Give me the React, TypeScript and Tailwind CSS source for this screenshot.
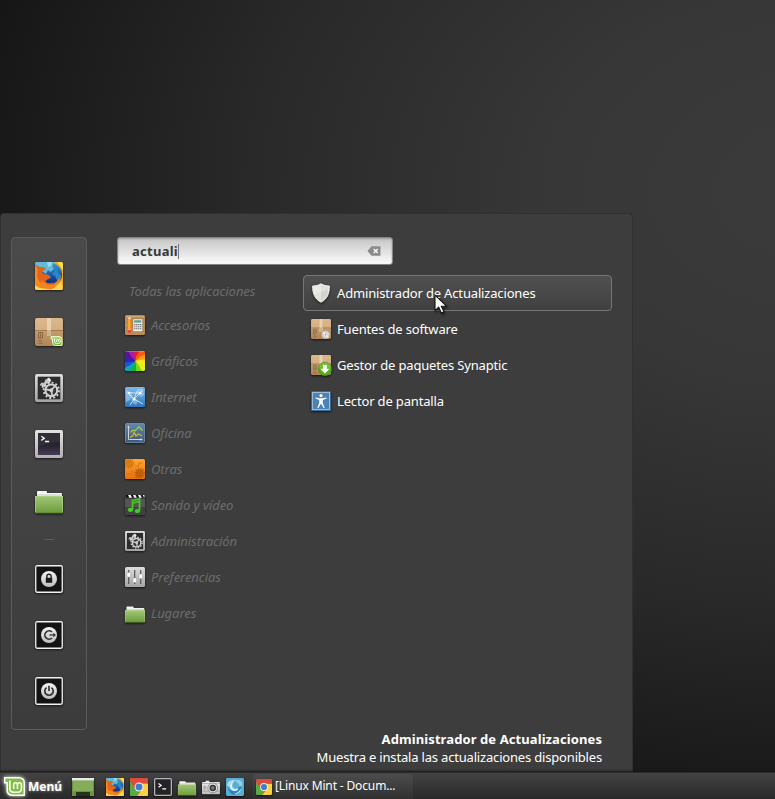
import type { ReactNode } from "react";

type IconProps = { className?: string };

/* Shared gradients used by every icon on the page. */
function Gradients() {
  const v = { x1: 0, y1: 0, x2: 0, y2: 1 };
  return (
    <svg className="absolute size-0" aria-hidden="true">
      <defs>
        <linearGradient id="folder" {...v}><stop stopColor="#a2c777" /><stop offset="1" stopColor="#6e9c3d" /></linearGradient>
        <linearGradient id="silver" {...v}><stop stopColor="#dedede" /><stop offset="1" stopColor="#a4a4a4" /></linearGradient>
        <linearGradient id="light" {...v}><stop stopColor="#f4f4f4" /><stop offset="1" stopColor="#bdbdbd" /></linearGradient>
        <linearGradient id="box" {...v}><stop stopColor="#dcb88b" /><stop offset=".45" stopColor="#c49b6e" /><stop offset="1" stopColor="#b08658" /></linearGradient>
        <linearGradient id="orange" {...v}><stop stopColor="#ffa834" /><stop offset="1" stopColor="#e9700c" /></linearGradient>
        <linearGradient id="sky" {...v}><stop stopColor="#7eb8ee" /><stop offset="1" stopColor="#2f78bd" /></linearGradient>
        <linearGradient id="steel" {...v}><stop stopColor="#6487b0" /><stop offset="1" stopColor="#3d5878" /></linearGradient>
        <linearGradient id="night" {...v}><stop stopColor="#25222b" /><stop offset=".6" stopColor="#29252f" /><stop offset="1" stopColor="#463b57" /></linearGradient>
        <linearGradient id="globe" {...v}><stop stopColor="#3f9ed2" /><stop offset=".6" stopColor="#164c9c" /><stop offset="1" stopColor="#0b2468" /></linearGradient>
        <linearGradient id="mint" {...v}><stop stopColor="#b4e073" /><stop offset="1" stopColor="#67b42c" /></linearGradient>
        <clipPath id="round28"><rect width="28" height="28" rx="2" /></clipPath>
        <clipPath id="round20"><rect width="20" height="20" rx="1.6" /></clipPath>
      </defs>
    </svg>
  );
}

const shadow = "block shrink-0 overflow-visible drop-shadow-[0_1px_1px_rgba(0,0,0,0.65)]";

function Svg({ size, className = "", children }: { size: 20 | 28; className?: string; children: ReactNode }) {
  return (
    <svg viewBox={size === 28 ? "0 0 28 28" : "0 0 20 20"} className={`${shadow} ${className}`}>
      {children}
    </svg>
  );
}

function Firefox({ className }: IconProps) {
  return (
    <Svg size={28} className={className}>
      <g clipPath="url(#round28)">
        <rect width="28" height="28" fill="#e8741b" />
        <path d="M16 0H28V28H12C23 27 29 20 25 9Z" fill="#f7a51d" />
        <path d="M22 0H28V8Z" fill="#ffe04a" />
        <path d="M23 3C28 9 28 18 23 23L17 27C24 21 26 13 23 3Z" fill="#ffe95a" />
        <circle cx="15.3" cy="12.6" r="11.8" fill="url(#globe)" />
        <path d="M0 0H20L17 3.5L19 7L15.5 10L13 8L11 12L5 8L0 5Z" fill="#5fbcdc" />
        <path d="M12 0H17L16 4L13 5Z" fill="#9adbea" />
        <path d="M19 3L24 6L22 9L26 14L23 20L20 14L17 12L20 8Z" fill="#2a86c4" />
        <path d="M0 2Q3 5 5 5Q9 4 11 7L8 9Q6 11 9 12L14 13L16 15.5L12.5 17.5Q10 18.5 11 20Q14 22.5 19 20Q16 25 10 25L0 28Z" fill="#e36418" />
        <path d="M0 3Q4 8 2 14Q4 23 12 26L8 28H0Z" fill="#f28c27" />
        <path d="M7 18Q11 24.5 18 22Q24 19 26 13Q26 24 14 28H8L4 23Z" fill="#f0861d" />
        <path d="M0 23Q4 27 10 26.5L17 28H0ZM14 28Q22 26 26 19L28 28Z" fill="#ffd84d" />
      </g>
    </Svg>
  );
}

function BoxArt() {
  return (
    <>
      <rect width="28" height="28" rx="2" fill="url(#box)" />
      <path d="M1 1H27L28 12H0Z" fill="#dcb98e" opacity=".65" />
      <path d="M0 12.5H28" stroke="#9d744b" strokeWidth=".8" />
      <path d="M12 0H16V18H12Z" fill="#e7d2b0" />
      <path d="M12 12H16V18H12Z" fill="#cfb48c" />
      <path d="M3.5 14.5H7.5V20H3.5ZM5.5 15.5V19M3.5 22.5H6.5M3.5 25H8" fill="none" stroke="#8a6440" strokeWidth="1" />
    </>
  );
}

function PackageMint({ className }: IconProps) {
  return (
    <Svg size={28} className={className}>
      <BoxArt />
      <path d="M16 18.5H24Q27 18.5 27 21.5V27.5H20.5Q17.5 27.5 17.5 24V21H16Z" fill="url(#mint)" stroke="#e4f7cc" strokeWidth="1" />
      <path d="M19.5 20.5V23.6Q19.5 25.6 21.4 25.6H23.4Q25.3 25.6 25.3 23.6V22.6Q25.3 21.6 24.3 21.6Q23.4 21.6 23.4 22.6V24M23.4 22.6Q23.3 21.6 22.4 21.6Q21.5 21.6 21.5 22.6V24" fill="none" stroke="#fff" strokeWidth=".9" />
    </Svg>
  );
}

function PackageDisc({ className }: IconProps) {
  return (
    <Svg size={28} className={className}>
      <BoxArt />
      <circle cx="20.5" cy="22" r="5.6" fill="#d5d5d0" stroke="#a9a49c" strokeWidth=".8" />
      <path d="M20.5 22L17 18.5M20.5 22L24 25.5" stroke="#f2f2f2" strokeWidth="2" />
      <circle cx="20.5" cy="22" r="1.6" fill="#b08d62" stroke="#fff" strokeWidth=".8" />
    </Svg>
  );
}

function PackageDownload({ className }: IconProps) {
  return (
    <Svg size={28} className={className}>
      <BoxArt />
      <circle cx="19.5" cy="19.5" r="9.4" fill="#58ad1e" stroke="#3f8a10" strokeWidth=".8" />
      <path d="M11.2 18A8.4 8.4 0 0 1 27.8 18Z" fill="#8ed14b" opacity=".55" />
      <path d="M16.8 14H22.2V19.3H26L19.5 26L13 19.3H16.8Z" fill="#fff" />
    </Svg>
  );
}

function Gear({ x, y, r, color, hub }: { x: number; y: number; r: number; color: string; hub: string }) {
  const tooth = (2 * Math.PI * (r + 0.8)) / 24;
  return (
    <g>
      <circle cx={x} cy={y} r={r + 0.8} fill="none" stroke={color} strokeWidth="1.9" strokeDasharray={`${tooth} ${tooth}`} />
      <circle cx={x} cy={y} r={r - 1} fill={hub} stroke={color} strokeWidth="2" />
      <path d={`M${x} ${y}L${x - r + 1} ${y - 1}M${x} ${y}L${x + r * 0.6} ${y - r * 0.7}M${x} ${y}L${x + 1} ${y + r - 1}`} stroke={color} strokeWidth="1.7" />
      <circle cx={x} cy={y} r={r * 0.28} fill={color} />
    </g>
  );
}

function GearFrame({ className }: IconProps) {
  return (
    <Svg size={28} className={className}>
      <rect width="28" height="28" rx="2" fill="url(#silver)" />
      <rect x="2.7" y="2.7" width="22.6" height="22.6" fill="#2c2c2c" />
      <path d="M4.5 11.5L6.5 8.5L9 9L10.5 5.5L13.5 4.5L16 6.5L14.5 9L11.5 9.5L10 13L7 14L6.5 11.5Z" fill="#c8c8c8" />
      <path d="M12 5L14 3.6L16 6L15 8Z" fill="#ececec" />
      <Gear x={16.3} y={16.3} r={6.9} color="#d2d2d2" hub="#343434" />
    </Svg>
  );
}

function TerminalLarge({ className }: IconProps) {
  return (
    <Svg size={28} className={className}>
      <rect width="28" height="28" rx="2" fill="url(#silver)" />
      <rect width="28" height="28" rx="2" fill="#fff" opacity=".15" />
      <rect x="3" y="3" width="22" height="22" fill="url(#night)" />
      <path d="M3 3H25V12Q13 12 3 17Z" fill="#fff" opacity=".05" />
      <path d="M6.3 6.3L9.3 8.3L6.3 10.4M10 11.5H14" fill="none" stroke="#fff" strokeWidth="1.3" />
    </Svg>
  );
}

function Folder({ className }: IconProps) {
  return (
    <Svg size={28} className={className}>
      <path d="M2 5.7Q2 5 2.8 5H11Q12 5 12 5.9V7H26Q27 7 27 8V12H2Z" fill="#f5f5f5" />
      <path d="M2 9H27" stroke="#bbb" strokeWidth=".8" />
      <path d="M0 10H28V25.5Q28 27 26.5 27H1.5Q0 27 0 25.5Z" fill="url(#folder)" />
      <path d="M.5 26.5V10.5H27.5V26.5" fill="none" stroke="#b4d38d" strokeWidth=".8" opacity=".75" />
      <path d="M0 27H28" stroke="#507629" strokeWidth=".8" />
    </Svg>
  );
}

function SessionIcon({ className, children }: { className?: string; children: ReactNode }) {
  return (
    <Svg size={28} className={className}>
      <rect x=".75" y=".75" width="26.5" height="26.5" rx="1.4" fill="#131313" stroke="#f2f2f2" strokeWidth="1.3" />
      <circle cx="14" cy="14" r="8" fill="url(#light)" />
      {children}
    </Svg>
  );
}

function Lock({ className }: IconProps) {
  return (
    <SessionIcon className={className}>
      <path d="M11.9 13V11.3A2.1 2.1 0 0 1 16.1 11.3V13" fill="none" stroke="#222" strokeWidth="1.4" />
      <rect x="10.8" y="12.8" width="6.4" height="5" fill="#1c1c1c" />
    </SessionIcon>
  );
}

function Logout({ className }: IconProps) {
  return (
    <SessionIcon className={className}>
      <path d="M17 11A4.2 4.2 0 1 0 17 17" fill="none" stroke="#333" strokeWidth="1.7" />
      <path d="M14.5 14H20" stroke="#333" strokeWidth="1.3" />
      <path d="M18.3 11.8L21 14L18.3 16.2Z" fill="#333" />
    </SessionIcon>
  );
}

function Power({ className }: IconProps) {
  return (
    <SessionIcon className={className}>
      <path d="M11.6 10.6A4.2 4.2 0 1 0 16.4 10.6M14 8.8V14" fill="none" stroke="#333" strokeWidth="1.7" />
    </SessionIcon>
  );
}

function Accessories({ className }: IconProps) {
  return (
    <Svg size={20} className={className}>
      <rect width="20" height="20" rx="1.6" fill="#b98c58" />
      <path d="M.5 1H19.5V2.5H.5ZM.5 7H19.5M.5 12H19.5M.5 16H19.5" fill="#dab380" stroke="#a57843" strokeWidth=".4" />
      <path d="M3 4L4.5 1.2L6 4V15H3Z" fill="#f28c1b" />
      <path d="M3 4L4.5 1.2L6 4Z" fill="#f4deb6" />
      <path d="M4.1 4V15" stroke="#ffc14e" />
      <path d="M3 14H6V15H3Z" fill="#ccc" />
      <rect x="3" y="15" width="3" height="2.8" fill="#e5484a" />
      <rect x="8" y="4" width="9.5" height="12.5" rx=".8" fill="#eeeee8" stroke="#777" strokeWidth=".4" />
      <rect x="9.2" y="5.3" width="7" height="2.3" fill="#5e9d84" />
      {[9.1, 11.2, 13.3].map((y) => (
        <path key={y} d={`M9.3 ${y + 0.5}H16.4`} stroke="#4a4a4a" strokeWidth="1.1" strokeDasharray="1.1 .85" />
      ))}
    </Svg>
  );
}

function Graphics({ className }: IconProps) {
  const colors = ["#e82127", "#ff5a13", "#ff9d16", "#f9e91b", "#e6f01b", "#7fd51d", "#0fb63a", "#12a7b0", "#1555df", "#3521bd", "#5a1298", "#a41eab"];
  return (
    <Svg size={20} className={className}>
      <g clipPath="url(#round20)">
        {colors.map((c, i) => (
          <path key={c} d="M10 10Q7.5 2 10 -6H19Q13 3 10 10Z" fill={c} transform={`rotate(${i * 30} 10 10)`} />
        ))}
        <path d="M0 0H20V1H0Z" fill="#fff" opacity=".25" />
      </g>
    </Svg>
  );
}

function Internet({ className }: IconProps) {
  return (
    <Svg size={20} className={className}>
      <rect width="20" height="20" rx="1.6" fill="url(#sky)" />
      <path d="M1 3L6 5L8 9L5 13L1 15ZM12 2H18L19 8L16 10L12 7ZM9 12L13 13L11 18L8 16Z" fill="#b7dafa" opacity=".5" />
      <path d="M2.5 5.5L9 12L17.5 3.5M9 12L5 18M9 12L18 17M3 5.5L17 6.5M9 12L12 4" fill="none" stroke="#e9f4ff" strokeWidth=".8" />
      <circle cx="9" cy="12" r="1.6" fill="#fff" />
      <circle cx="4" cy="6" r="1.1" fill="#fff" />
      <circle cx="15" cy="6" r="1.2" fill="#fff" />
    </Svg>
  );
}

function Office({ className }: IconProps) {
  return (
    <Svg size={20} className={className}>
      <rect x=".4" y=".4" width="19.2" height="19.2" rx="1.4" fill="url(#steel)" stroke="#809dbc" strokeWidth=".8" />
      <path d="M3.5 3V16.5H17" fill="none" stroke="#ddd" strokeWidth=".9" />
      <path d="M2.3 4.7L3.5 2.2L4.7 4.7M15.5 15.3L18 16.5L15.5 17.7" fill="#ddd" />
      <path d="M5.5 9.5L8 7.2L10 7.8L14 3.8L17.5 7.5" fill="none" stroke="#a6d936" strokeWidth="1.1" />
      <path d="M5 14.5L7.5 13L9.3 9.5L11 13L13.5 11L17 13" fill="none" stroke="#e5b51b" strokeWidth="1.2" />
    </Svg>
  );
}

function Others({ className }: IconProps) {
  return (
    <Svg size={20} className={className}>
      <g clipPath="url(#round20)">
        <rect width="20" height="20" fill="url(#orange)" />
        <Gear x={4} y={4.5} r={3.8} color="#d8780f" hub="#f79a27" />
        <Gear x={14.8} y={14.2} r={3.8} color="#bd5b0a" hub="#ee8419" />
        <path d="M10 7H14V4H18M7 11V15H2M8 18H11" fill="none" stroke="#d0700f" strokeWidth=".8" />
      </g>
    </Svg>
  );
}

function Sound({ className }: IconProps) {
  return (
    <Svg size={20} className={className}>
      <rect y="1" width="20" height="19" rx="1.6" fill="#414141" />
      <rect y="4" width="20" height="8" fill="#555" />
      <path d="M1 0H20V2.4H1Z" fill="#111" />
      <path d="M3 0H5.7L7 2.8H4.3ZM8 0H10.5L11.8 2.8H9.2ZM13 0H15.5L16.8 2.8H14.2ZM17.7 0H19.5V2.6H19Z" fill="#f4f4f4" />
      <path d="M7.5 14.5V5.5L14.5 4V15.5M7.5 8L14.5 6.5" fill="none" stroke="#43cc26" strokeWidth="1.7" />
      <ellipse cx="5.6" cy="14.8" rx="2.7" ry="2.1" fill="#43cc26" />
      <ellipse cx="12.5" cy="16" rx="2.7" ry="2.1" fill="#43cc26" />
    </Svg>
  );
}

function Preferences({ className }: IconProps) {
  return (
    <Svg size={20} className={className}>
      <rect width="20" height="20" rx="1.6" fill="url(#silver)" />
      <path d="M3.7 3V17M9.7 3V17M15.7 3V17" stroke="#555" strokeWidth="1.2" />
      {[[2, 5.5], [8, 11], [14, 7]].map(([x, y]) => (
        <rect key={x} x={x} y={y} width="3.5" height="4.6" rx=".7" fill="#fff" stroke="#8f8f8f" strokeWidth=".4" />
      ))}
    </Svg>
  );
}

function Shield({ className }: IconProps) {
  return (
    <Svg size={20} className={className}>
      <path d="M10 .8C7.5 2.5 4.5 3 1.7 3C1.5 10 3.5 16 10 19.2C16.5 16 18.5 10 18.3 3C15.5 3 12.5 2.5 10 .8Z" fill="#e2e3de" stroke="#f6f6f4" strokeWidth="1" />
      <path d="M10 2V18C15.5 15 17.2 10 17.2 4C14.5 4 12 3.3 10 2Z" fill="#d2d3cd" />
      <path d="M2.7 4C5.5 4 8 3.3 10 2C12 3.3 14.5 4 17.2 4V7Q9 9 3 11Z" fill="#fff" opacity=".3" />
    </Svg>
  );
}

function Accessibility({ className }: IconProps) {
  return (
    <Svg size={20} className={className}>
      <rect width="20" height="20" rx="1.2" fill="#3a6a98" />
      <rect x="1.5" y="1.5" width="17" height="17" fill="#4c82b4" stroke="#a3c4e0" strokeWidth=".9" />
      <circle cx="10" cy="4.6" r="1.6" fill="#fff" />
      <path d="M4.5 6.5L8.7 7.2H11.3L15.5 6.5V7.6L11.8 8.9V12L13.7 17H12.6L10 12.5L7.4 17H6.3L8.2 12V8.9L4.5 7.6Z" fill="#fff" />
    </Svg>
  );
}

function MintLogo({ className }: IconProps) {
  return (
    <svg viewBox="0 0 20 18" className={`block shrink-0 overflow-visible drop-shadow-[0_0_2px_rgba(255,255,255,0.9)] ${className}`}>
      <path d="M.7.7H14Q19.3.7 19.3 6V17.3H8.5Q3 17.3 3 12V5.5H.7Z" fill="#82bd43" stroke="#fff" strokeWidth="1.4" />
      <path d="M5.6 3.2V11Q5.6 14.5 9 14.5H13.1Q16.6 14.5 16.6 11V7.6Q16.6 5.5 14.6 5.5Q12.8 5.5 12.8 7.6V11.3M12.8 7.6Q12.6 5.5 11 5.5Q9.2 5.5 9.2 7.6V11.3" fill="none" stroke="#fff" strokeWidth="1.5" />
    </svg>
  );
}

function ShowDesktop({ className }: IconProps) {
  return (
    <svg viewBox="0 0 22 18" className={`${shadow} ${className}`}>
      <rect width="22" height="18" fill="#6b9342" />
      <rect x="1" y="3" width="20" height="10" fill="#83ad58" />
      <rect width="22" height="2.5" fill="#e9ece6" />
      <path d="M4 18V14H18V18Z" fill="#26301d" />
    </svg>
  );
}

function Chrome({ className }: IconProps) {
  return (
    <Svg size={28} className={className}>
      <g clipPath="url(#round28)">
        <rect width="28" height="28" fill="#e04236" />
        <path d="M0 4L8 17L15 21L11 28H0Z" fill="#56ab45" />
        <path d="M14 8H28V28H11L20 16Z" fill="#fbd041" />
        <path d="M0 0H28V8.5H14L8 16L0 4Z" fill="#de4a3f" />
        <circle cx="14" cy="14" r="6.9" fill="#f5f5f5" />
        <circle cx="14" cy="14" r="5.4" fill="#3f80c4" />
      </g>
    </Svg>
  );
}

function TerminalSmall({ className }: IconProps) {
  return (
    <Svg size={20} className={className}>
      <rect x=".7" y=".7" width="18.6" height="18.6" rx="1.2" fill="#25232a" stroke="#b4b4b4" strokeWidth="1.4" />
      <path d="M5 6.2L8 8.3L5 10.3M9.2 12H13.5" fill="none" stroke="#fff" strokeWidth="1.3" />
    </Svg>
  );
}

function Camera({ className }: IconProps) {
  return (
    <Svg size={20} className={className}>
      <path d="M1 4.5H4V3H8V4.5H19Q20 4.5 20 5.5V17Q20 18 19 18H1Q0 18 0 17V5.5Q0 4.5 1 4.5Z" fill="url(#light)" />
      <path d="M0 6H20M0 14.5H20" stroke="#929292" strokeWidth=".7" />
      <circle cx="12" cy="11" r="5.5" fill="#ddd" stroke="#777" strokeWidth=".8" />
      <circle cx="12" cy="11" r="3.6" fill="#34383d" />
      <circle cx="12" cy="11" r="1.8" fill="#777f88" />
      <path d="M1.5 8.5H4.5V12.5H1.5Z" fill="#aaa" />
    </Svg>
  );
}

function Swirl({ className }: IconProps) {
  return (
    <Svg size={20} className={className}>
      <rect width="20" height="20" rx="1.6" fill="#5aaed6" />
      <path d="M10 2Q4 4 4 10L1 8Q2 2 10 2Z" fill="#a9def2" />
      <path d="M9 3Q19 0 18 9L15 12Q16 5 9 3Z" fill="#8fd0ea" />
      <path d="M2 9Q3 14 8 14Q12 14 14 10L17 9Q18 17 9 19Q3 18 2 9Z" fill="#2b84b8" />
      <path d="M11 2Q6 5 7 10Q9 14 14 11Q12 16 7 14Q3 11 5 6Q7 3 11 2ZM17 11Q16 18 8 18Q14 17 17 11Z" fill="#dbf5ff" />
    </Svg>
  );
}

function ClearIcon() {
  return (
    <svg viewBox="0 0 14 10" className="block h-2.5 w-3.5">
      <path d="M.5 5L4.5 .2H13Q13.5 .2 13.5.7V9.3Q13.5 9.8 13 9.8H4.5Z" fill="#8b8b8b" />
      <path d="M6.7 3L10.7 7M10.7 3L6.7 7" stroke="#f4f4f4" strokeWidth="1.6" />
    </svg>
  );
}

function Pointer() {
  return (
    <svg viewBox="0 0 14 20" className="absolute left-[130px] top-[18px] h-5 w-3.5 overflow-visible drop-shadow-[1px_2px_1px_rgba(0,0,0,0.5)]">
      <path d="M1 1V16.5L4.7 13.2L7.3 19L10 17.8L7.4 12.2H12.5Z" fill="#fff" stroke="#151515" strokeWidth="1.1" />
    </svg>
  );
}

const categories = [
  { label: "Accesorios", Icon: Accessories },
  { label: "Gráficos", Icon: Graphics },
  { label: "Internet", Icon: Internet },
  { label: "Oficina", Icon: Office },
  { label: "Otras", Icon: Others },
  { label: "Sonido y vídeo", Icon: Sound },
  { label: "Administración", Icon: GearFrame },
  { label: "Preferencias", Icon: Preferences },
  { label: "Lugares", Icon: Folder },
];

const results = [
  { label: "Fuentes de software", Icon: PackageDisc },
  { label: "Gestor de paquetes Synaptic", Icon: PackageDownload },
  { label: "Lector de pantalla", Icon: Accessibility },
];

const favorites = [Firefox, PackageMint, GearFrame, TerminalLarge, Folder];
const session = [Lock, Logout, Power];
const launchers = [Firefox, Chrome, TerminalSmall, Folder, Camera, Swirl];

function Sidebar() {
  return (
    <aside className="flex h-[493px] w-[76px] shrink-0 flex-col items-center rounded-[4px] border border-[#5b5b5b] bg-linear-to-b from-[#4a4a4a] to-[#3c3c3c] pt-6">
      <div className="flex flex-col gap-7">
        {favorites.map((Icon, i) => <Icon key={i} className="size-7" />)}
      </div>
      <div className="my-[25px] h-px w-2.5 shrink-0 bg-[#5b5b5b]" />
      <div className="flex flex-col gap-7">
        {session.map((Icon, i) => <Icon key={i} className="size-7" />)}
      </div>
    </aside>
  );
}

function Menu() {
  return (
    <section className="flex h-[559px] w-[633px] shrink-0 rounded-t-[4px] border border-b-0 border-[#303030] bg-[#3d3d3d] pl-2.5 pt-[23px] text-[13px] leading-[18px]">
      <Sidebar />
      <div className="ml-[30px] flex flex-1 flex-col">
        <div className="flex h-7 w-[276px] items-center rounded-[3px] border border-[#858585] bg-linear-to-b from-[#c5c5c5] to-[#fcfcfc] pl-3.5 pr-[11px] shadow-[inset_0_1px_2px_#999]">
          <span className="font-bold tracking-[0.27px] text-[#383838]">actuali</span>
          <span className="h-[15px] w-px bg-[#777]" />
          <span className="ml-auto"><ClearIcon /></span>
        </div>
        <div className="mt-2.5 flex">
          <nav className="w-[186px] pl-2 italic tracking-[-0.06px] text-[#6c6c6c]">
            <div className="flex h-8 items-center pl-1">Todas las aplicaciones</div>
            {categories.map(({ label, Icon }) => (
              <div key={label} className="flex h-9 items-center gap-1.5"><Icon className="size-5" />{label}</div>
            ))}
          </nav>
          <div className="w-[309px] tracking-[-0.16px] text-white">
            <div className="relative flex h-9 items-center gap-1.5 rounded-[4px] border border-[#777] bg-linear-to-b from-[#505050] to-[#404040] pl-[7px]">
              <Shield className="size-5" />Administrador de Actualizaciones
              <Pointer />
            </div>
            {results.map(({ label, Icon }) => (
              <div key={label} className="flex h-9 items-center gap-1.5 pl-2"><Icon className="size-5" />{label}</div>
            ))}
          </div>
        </div>
        <div className="mb-[6px] mr-[30px] mt-auto text-right text-white">
          <p className="font-bold tracking-[0.09px]">Administrador de Actualizaciones</p>
          <p className="tracking-[-0.18px]">Muestra e instala las actualizaciones disponibles</p>
        </div>
      </div>
    </section>
  );
}

function Taskbar() {
  return (
    <footer className="flex h-[27px] shrink-0 items-center border-t border-[#2b2b2b] bg-linear-to-b from-[#434343] to-[#292929] pl-1 pt-px text-white shadow-[0_-1px_2px_#171717]">
      <MintLogo className="h-[19px] w-[21px]" />
      <span className="ml-[3px] w-[44px] text-[12px] font-bold leading-4 [text-shadow:0_0_3px_rgba(255,255,255,0.6)]">Menú</span>
      <ShowDesktop className="h-[18px] w-[22px]" />
      <div className="ml-3 flex gap-1.5">
        {launchers.map((Icon, i) => <Icon key={i} className="size-[18px]" />)}
      </div>
      <div className="ml-[9px] flex h-full w-[160px] items-center rounded-t-[4px] bg-linear-to-b from-[#4c4c4c] to-[#303030] pl-[3px] text-[12px] leading-4">
        <Chrome className="size-4" /><span className="-mt-0.5 ml-[3px] whitespace-nowrap tracking-[-0.14px]">[Linux Mint - Docum...</span>
      </div>
    </footer>
  );
}

export default function App() {
  return (
    <main className="relative flex h-[799px] w-[775px] select-none flex-col justify-end overflow-hidden bg-[#1b1b1b] bg-[radial-gradient(ellipse_860px_640px_at_810px_190px,#3b3b3b_0%,#373737_30%,#292929_65%,#1b1b1b_90%,#141414_102%)] font-['Noto_Sans',sans-serif]">
      <Gradients />
      <Menu />
      <Taskbar />
    </main>
  );
}
